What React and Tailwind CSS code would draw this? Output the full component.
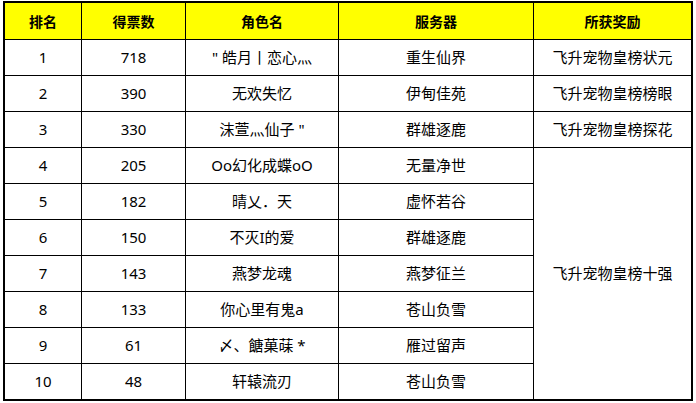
const rows = [
  { rank: 1, votes: 718, name: '" 皓月丨恋心灬', server: '重生仙界', reward: '飞升宠物皇榜状元' },
  { rank: 2, votes: 390, name: '无欢失忆', server: '伊甸佳苑', reward: '飞升宠物皇榜榜眼' },
  { rank: 3, votes: 330, name: '沫萱灬仙子 "', server: '群雄逐鹿', reward: '飞升宠物皇榜探花' },
  { rank: 4, votes: 205, name: 'Oo幻化成蝶oO', server: '无量净世' },
  { rank: 5, votes: 182, name: '晴乂．天', server: '虚怀若谷' },
  { rank: 6, votes: 150, name: '不灭I的爱', server: '群雄逐鹿' },
  { rank: 7, votes: 143, name: '燕梦龙魂', server: '燕梦征兰' },
  { rank: 8, votes: 133, name: '你心里有鬼a', server: '苍山负雪' },
  { rank: 9, votes: 61, name: '〆、餹菓菋 *', server: '雁过留声' },
  { rank: 10, votes: 48, name: '轩辕流刃', server: '苍山负雪' },
];

const headers = ['排名', '得票数', '角色名', '服务器', '所获奖励'];

const cell = 'bg-white flex items-center justify-center text-[15px] text-black';

const App = () => {
  return (
    <div
      className="w-[696px] h-[403px] bg-white pt-px pl-[3px]"
      style={{ fontFamily: '"Noto Sans", "Noto Sans CJK SC", sans-serif' }}
    >
      <div className="inline-grid grid-cols-[76px_103px_152px_194px_157px] grid-rows-[36px_repeat(10,35px)] gap-px bg-black border-2 border-black">
        {headers.map((h) => (
          <div key={h} className="bg-[#ffff00] flex items-center justify-center text-[14px] font-bold text-black">
            {h}
          </div>
        ))}

        {rows.map((r) => (
          <div key={r.rank} className="contents">
            <div className={cell}>{r.rank}</div>
            <div className={cell}>{r.votes}</div>
            <div className={`${cell} whitespace-pre`}>{r.name}</div>
            <div className={cell}>{r.server}</div>
            {r.reward && <div className={cell}>{r.reward}</div>}
            {r.rank === 4 && <div className={`${cell} row-span-7`}>飞升宠物皇榜十强</div>}
          </div>
        ))}
      </div>
    </div>
  );
};

export default App;
